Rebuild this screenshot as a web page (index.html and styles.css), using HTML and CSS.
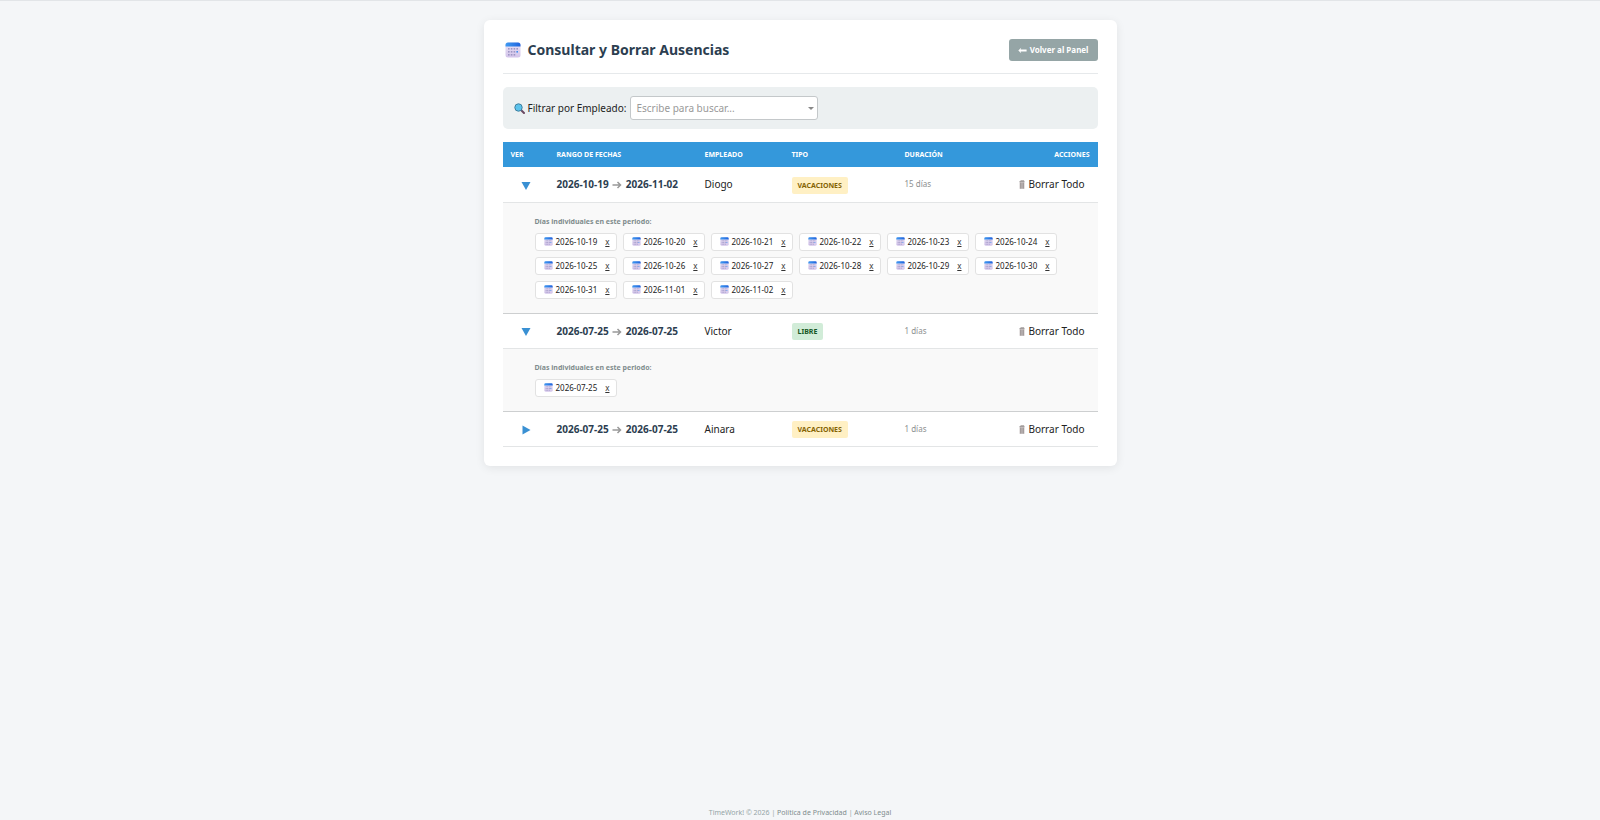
FILE: index.html
```html
<!DOCTYPE html>
<html lang="es">
<head>
    <meta charset="UTF-8">
    <meta name="viewport" content="width=device-width, initial-scale=1.0">
    <title>Consultar y Borrar Ausencias</title>
    <link rel="stylesheet" href="styles.css">
</head>
<body>

    <!-- Shared icons -->
    <svg class="icon-defs" aria-hidden="true">
        <defs>
            <linearGradient id="calTop" x1="0" y1="0" x2="1" y2="0">
                <stop offset="0" stop-color="#3f9bf2"/>
                <stop offset="1" stop-color="#1f63dd"/>
            </linearGradient>
            <linearGradient id="calBody" x1="0" y1="0" x2="0" y2="1">
                <stop offset="0" stop-color="#e9e2f4"/>
                <stop offset="1" stop-color="#d3c4ea"/>
            </linearGradient>
        </defs>
        <symbol id="calendar" viewBox="0 0 16 16">
            <rect x="0.5" y="0.5" width="15" height="15" rx="2.5" fill="url(#calBody)"/>
            <path d="M3 0.5h10a2.5 2.5 0 0 1 2.5 2.5v1.5h-15V3A2.5 2.5 0 0 1 3 0.5z" fill="url(#calTop)"/>
            <g fill="#9d95c4">
                <rect x="3" y="6" width="1.6" height="1.6"/><rect x="5.8" y="6" width="1.6" height="1.6"/><rect x="8.6" y="6" width="1.6" height="1.6"/><rect x="11.4" y="6" width="1.6" height="1.6"/>
                <rect x="3" y="9" width="1.6" height="1.6"/><rect x="5.8" y="9" width="1.6" height="1.6"/><rect x="8.6" y="9" width="1.6" height="1.6"/><rect x="11.4" y="9" width="1.6" height="1.6" fill="#3f8fee"/>
                <rect x="3" y="12" width="1.6" height="1.6"/><rect x="5.8" y="12" width="1.6" height="1.6"/><rect x="8.6" y="12" width="1.6" height="1.6"/>
            </g>
        </symbol>
        <symbol id="trash" viewBox="0 0 6 9">
            <path d="M0.5 1.2h5v1h-5z" fill="#8a8484"/>
            <path d="M1.5 0.2h3.6v1H1.5z" fill="#a8a2a2"/>
            <path d="M0.6 2.2h4.8v6.6H0.6z" fill="#c2bbbb"/>
            <path d="M1.5 2.6v6M3 2.6v6M4.5 2.6v6" stroke="#8f8888" stroke-width="0.6"/>
        </symbol>
    </svg>

    <main class="container">
        <header class="page-header">
            <h1><svg class="icon-title"><use href="#calendar"/></svg>Consultar y Borrar Ausencias</h1>
            <button type="button" class="btn-back">
                <svg class="icon-back" viewBox="0 0 9 7"><path d="M3.2 0.8L2.6 2.6H8.6v1.8H2.6l0.6 1.8L0.3 3.5z" fill="#fff"/></svg>
                Volver al Panel
            </button>
        </header>

        <div class="filter-box">
            <label for="empleado">
                <svg class="icon-search" viewBox="0 0 11 11">
                    <path d="M7 7l3 3" stroke="#6b4a63" stroke-width="2" stroke-linecap="round"/>
                    <circle cx="4.5" cy="4.5" r="3.7" fill="#5cc3ec" stroke="#3f7f9f" stroke-width="1"/>
                </svg>
                Filtrar por Empleado:
            </label>
            <div class="select-wrap">
                <select id="empleado" name="empleado">
                    <option value="">Escribe para buscar...</option>
                    <option>Diogo</option>
                    <option>Victor</option>
                    <option>Ainara</option>
                </select>
            </div>
        </div>

        <table class="absences">
            <thead>
                <tr>
                    <th class="col-toggle">VER</th>
                    <th class="col-range">RANGO DE FECHAS</th>
                    <th class="col-employee">EMPLEADO</th>
                    <th class="col-type">TIPO</th>
                    <th>DURACIÓN</th>
                    <th class="actions">ACCIONES</th>
                </tr>
            </thead>
            <tbody>
                <tr class="group">
                    <td class="toggle-cell"><button type="button" class="toggle" aria-label="Ocultar días" aria-expanded="true"><svg viewBox="0 0 10 10"><path d="M0.5 1h9L5 9z"/></svg></button></td>
                    <td class="range">2026-10-19 <svg class="arrow" viewBox="0 0 10 8"><path d="M0.5 4h8M5.5 1l3 3-3 3"/></svg> 2026-11-02</td>
                    <td>Diogo</td>
                    <td><span class="badge badge-vacation">VACACIONES</span></td>
                    <td class="duration">15 días</td>
                    <td class="actions"><button type="button" class="btn-delete"><svg class="icon-trash"><use href="#trash"/></svg>Borrar Todo</button></td>
                </tr>
                <tr class="detail">
                    <td colspan="6">
                        <p class="detail-title">Días individuales en este periodo:</p>
                        <div class="days">
                            <span class="day"><svg class="icon-day"><use href="#calendar"/></svg>2026-10-19<a href="#">x</a></span>
                            <span class="day"><svg class="icon-day"><use href="#calendar"/></svg>2026-10-20<a href="#">x</a></span>
                            <span class="day"><svg class="icon-day"><use href="#calendar"/></svg>2026-10-21<a href="#">x</a></span>
                            <span class="day"><svg class="icon-day"><use href="#calendar"/></svg>2026-10-22<a href="#">x</a></span>
                            <span class="day"><svg class="icon-day"><use href="#calendar"/></svg>2026-10-23<a href="#">x</a></span>
                            <span class="day"><svg class="icon-day"><use href="#calendar"/></svg>2026-10-24<a href="#">x</a></span>
                            <span class="day"><svg class="icon-day"><use href="#calendar"/></svg>2026-10-25<a href="#">x</a></span>
                            <span class="day"><svg class="icon-day"><use href="#calendar"/></svg>2026-10-26<a href="#">x</a></span>
                            <span class="day"><svg class="icon-day"><use href="#calendar"/></svg>2026-10-27<a href="#">x</a></span>
                            <span class="day"><svg class="icon-day"><use href="#calendar"/></svg>2026-10-28<a href="#">x</a></span>
                            <span class="day"><svg class="icon-day"><use href="#calendar"/></svg>2026-10-29<a href="#">x</a></span>
                            <span class="day"><svg class="icon-day"><use href="#calendar"/></svg>2026-10-30<a href="#">x</a></span>
                            <span class="day"><svg class="icon-day"><use href="#calendar"/></svg>2026-10-31<a href="#">x</a></span>
                            <span class="day"><svg class="icon-day"><use href="#calendar"/></svg>2026-11-01<a href="#">x</a></span>
                            <span class="day"><svg class="icon-day"><use href="#calendar"/></svg>2026-11-02<a href="#">x</a></span>
                        </div>
                    </td>
                </tr>
                <tr class="group">
                    <td class="toggle-cell"><button type="button" class="toggle" aria-label="Ocultar días" aria-expanded="true"><svg viewBox="0 0 10 10"><path d="M0.5 1h9L5 9z"/></svg></button></td>
                    <td class="range">2026-07-25 <svg class="arrow" viewBox="0 0 10 8"><path d="M0.5 4h8M5.5 1l3 3-3 3"/></svg> 2026-07-25</td>
                    <td>Victor</td>
                    <td><span class="badge badge-free">LIBRE</span></td>
                    <td class="duration">1 días</td>
                    <td class="actions"><button type="button" class="btn-delete"><svg class="icon-trash"><use href="#trash"/></svg>Borrar Todo</button></td>
                </tr>
                <tr class="detail">
                    <td colspan="6">
                        <p class="detail-title">Días individuales en este periodo:</p>
                        <div class="days">
                            <span class="day"><svg class="icon-day"><use href="#calendar"/></svg>2026-07-25<a href="#">x</a></span>
                        </div>
                    </td>
                </tr>
                <tr class="group">
                    <td class="toggle-cell"><button type="button" class="toggle" aria-label="Ver días" aria-expanded="false"><svg viewBox="0 0 10 10"><path d="M1.5 0.5v9L9.5 5z"/></svg></button></td>
                    <td class="range">2026-07-25 <svg class="arrow" viewBox="0 0 10 8"><path d="M0.5 4h8M5.5 1l3 3-3 3"/></svg> 2026-07-25</td>
                    <td>Ainara</td>
                    <td><span class="badge badge-vacation">VACACIONES</span></td>
                    <td class="duration">1 días</td>
                    <td class="actions"><button type="button" class="btn-delete"><svg class="icon-trash"><use href="#trash"/></svg>Borrar Todo</button></td>
                </tr>
            </tbody>
        </table>
    </main>

    <footer class="footer">
        TimeWork! © 2026 <span>|</span> <a href="#">Política de Privacidad</a> <span>|</span> <a href="#">Aviso Legal</a>
    </footer>

</body>
</html>
```
FILE: styles.css
```css
/* General */
* {
    box-sizing: border-box;
}

body {
    font-family: 'Segoe UI', 'Noto Sans', 'Open Sans', sans-serif;
    font-size: 10px;
    line-height: 14px;
    background: #f4f6f8;
    color: #222;
    margin: 0;
    min-height: 100vh;
    display: flex;
    flex-direction: column;
    align-items: center;
    border-top: 1px solid #e2e5e8;
}

button, select {
    font-family: inherit;
    color: inherit;
}

.icon-defs {
    position: absolute;
    width: 0;
    height: 0;
}

/* Card */
.container {
    width: 100%;
    max-width: 633px;
    margin-top: 19px;
    padding: 19px;
    background: #fff;
    border-radius: 6px;
    box-shadow: 0 2px 10px rgba(0, 0, 0, 0.08);
}

/* Header */
.page-header {
    display: flex;
    justify-content: space-between;
    align-items: center;
    padding-bottom: 12px;
    margin-bottom: 13px;
    border-bottom: 1px solid #e6e9eb;
}

h1 {
    display: flex;
    align-items: center;
    margin: 0;
    font-size: 14px;
    line-height: 22px;
    color: #2c3e50;
}

.icon-title {
    width: 16px;
    height: 16px;
    margin: 0 7px 0 2px;
}

.btn-back {
    display: flex;
    align-items: center;
    gap: 3px;
    padding: 4px 9px;
    border: none;
    border-radius: 3px;
    background: #95a5a6;
    color: #fff;
    font-size: 8px;
    line-height: 14px;
    font-weight: bold;
    cursor: pointer;
}

.icon-back {
    width: 9px;
    height: 7px;
}

/* Filter */
.filter-box {
    display: flex;
    align-items: center;
    gap: 4px;
    padding: 9px 11px;
    margin-bottom: 13px;
    background: #ecf0f1;
    border-radius: 5px;
}

.filter-box label {
    display: flex;
    align-items: center;
    gap: 3px;
}

.icon-search {
    width: 11px;
    height: 11px;
}

.select-wrap {
    position: relative;
    width: 188px;
}

.select-wrap::after {
    content: "";
    position: absolute;
    right: 4px;
    top: 11px;
    border: 3px solid transparent;
    border-top-color: #888;
    border-bottom: 0;
    pointer-events: none;
}

select {
    display: block;
    width: 100%;
    height: 24px;
    padding: 0 5px;
    appearance: none;
    border: 1px solid #c4c8ca;
    border-radius: 3px;
    background: #fff;
    color: #999;
    font-size: 10px;
}

/* Table */
.absences {
    width: 100%;
    table-layout: fixed;
    border-collapse: collapse;
}

th {
    padding: 6px 8px 5px;
    background: #3498db;
    color: #fff;
    font-size: 7px;
    text-align: left;
}

.col-toggle {
    width: 46px;
}

.col-range {
    width: 148px;
}

.col-employee {
    width: 87px;
}

.col-type {
    width: 113px;
}

.group td {
    height: 35px;
    padding: 0 8px;
    border-bottom: 1px solid #e3e5e6;
}

.group .toggle-cell {
    padding: 0;
    text-align: center;
}

.toggle {
    padding: 0;
    border: none;
    background: none;
    cursor: pointer;
    vertical-align: middle;
}

.toggle svg {
    display: block;
    width: 10px;
    height: 10px;
    fill: #3990d3;
}

.range {
    font-weight: bold;
    color: #2c3e50;
    white-space: nowrap;
}

.arrow {
    width: 10px;
    height: 8px;
    margin: 0 1px;
    fill: none;
    stroke: #999;
    stroke-width: 1.5;
    vertical-align: -1px;
}

.badge {
    display: inline-block;
    margin-top: 2px;
    padding: 2px 6px;
    border-radius: 2px;
    font-size: 7px;
    line-height: 13px;
    font-weight: bold;
    vertical-align: middle;
}

.badge-vacation {
    background: #fff0c4;
    color: #856404;
}

.badge-free {
    background: #d1ecd8;
    color: #155724;
}

.duration {
    color: #8c9090;
    font-size: 8px;
}

th.actions, td.actions {
    text-align: right;
}

.btn-delete {
    padding: 0 5px;
    border: none;
    background: none;
    font-size: 10px;
    line-height: 14px;
    cursor: pointer;
}

.icon-trash {
    width: 6px;
    height: 9px;
    margin-right: 3px;
    vertical-align: -1px;
}

/* Individual days */
.detail td {
    padding: 12px 16px 14px 32px;
    background: #f9f9f9;
    border-bottom: 1px solid #cdcfd0;
}

.detail-title {
    margin: 0 0 4px;
    color: #7f8c8d;
    font-size: 7px;
    font-weight: bold;
}

.days {
    display: flex;
    flex-wrap: wrap;
    gap: 6px;
}

.day {
    display: flex;
    align-items: center;
    padding: 1px 6px 1px 8px;
    border: 1px solid #e2e2e2;
    border-radius: 3px;
    background: #fff;
    font-size: 8px;
    line-height: 14px;
}

.icon-day {
    width: 9px;
    height: 9px;
    margin-right: 3px;
}

.day a {
    margin-left: 8px;
    color: #333;
}

/* Footer */
.footer {
    width: 100%;
    margin-top: auto;
    padding: 5px 0 0;
    color: #95a5a6;
    font-size: 7px;
    text-align: center;
}

.footer a {
    color: #7f8c8d;
    text-decoration: none;
}
```
